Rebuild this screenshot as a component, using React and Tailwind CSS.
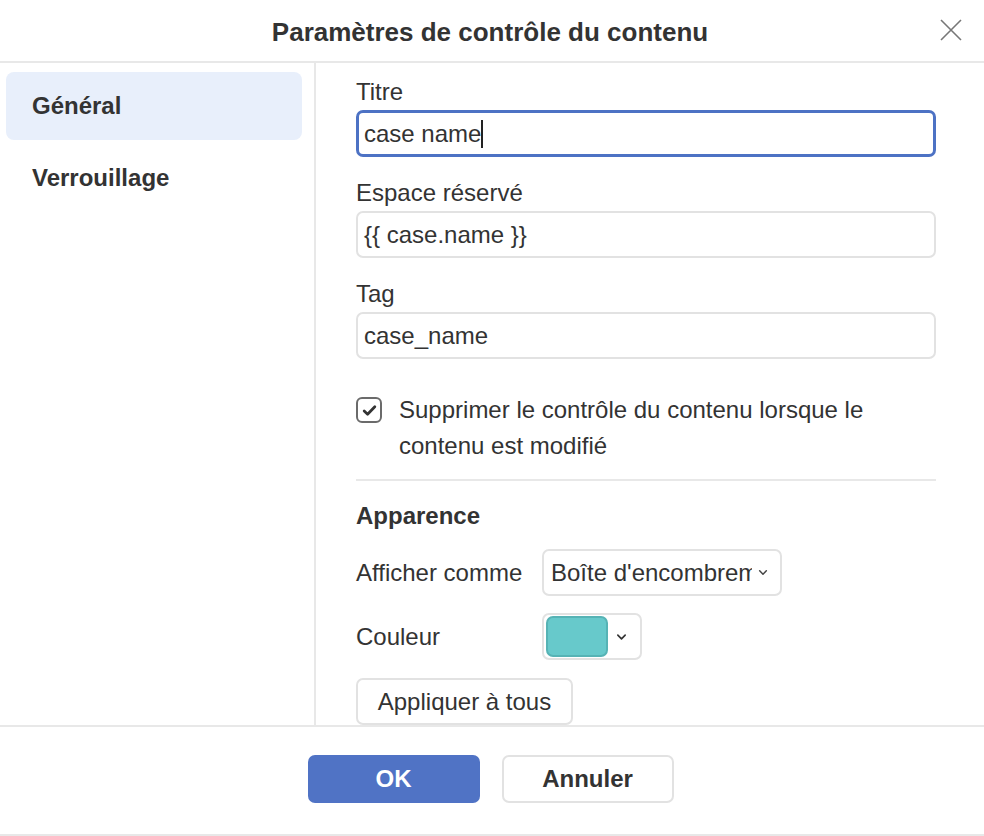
import { useState } from "react"

const font = { fontFamily: '"Liberation Sans", Arial, sans-serif' }

function Chevron({ className }) {
    return (
        <svg viewBox="0 0 12 8" className={className} fill="none" stroke="currentColor" strokeWidth="1.8" strokeLinecap="round" strokeLinejoin="round">
            <path d="M2 2l4 4 4-4" />
        </svg>
    )
}

function Field({ label, value, focused }) {
    return (
        <div className="flex flex-col">
            <label className="text-[24px] leading-[24px] text-[#333] mb-[6px]">{label}</label>
            <div className={"h-[47px] flex items-center rounded-[7px] text-[24px] text-[#333] " + (focused ? "border-[3px] border-[#4d72c4] pl-[5px]" : "border-2 border-[#e2e2e2] pl-[6px]")}>
                <span>{value}</span>
                {focused && <span className="w-[2px] h-[28px] bg-[#222]" />}
            </div>
        </div>
    )
}

export default function App() {
    const [tab, setTab] = useState("general")
    const [checked, setChecked] = useState(true)

    return (
        <div className="w-[984px] h-[836px] bg-white flex flex-col text-[#333]" style={font}>
            {/* dialog header */}
            <div className="h-[63px] shrink-0 flex items-center justify-center relative border-b-2 border-[#e8e8e8] pt-[3px]">
                <h1 className="text-[26px] font-bold text-[#333] ml-[-4px]">Paramètres de contrôle du contenu</h1>
                <button className="absolute right-[21px] top-[18px] w-[24px] h-[24px] text-[#777]">
                    <svg viewBox="0 0 24 24" className="w-[24px] h-[24px]" fill="none" stroke="currentColor" strokeWidth="1.6">
                        <path d="M2 2l20 20M22 2L2 22" />
                    </svg>
                </button>
            </div>

            <div className="flex flex-1 min-h-0">
                {/* sidebar */}
                <div className="w-[316px] shrink-0 border-r-2 border-[#e8e8e8] pl-[6px] pr-[12px] pt-[9px] flex flex-col gap-[4px]">
                    <button onClick={() => setTab("general")} className={"h-[68px] rounded-[8px] text-left pl-[26px] text-[24px] font-bold text-[#333] " + (tab === "general" ? "bg-[#e8effb]" : "")}>Général</button>
                    <button onClick={() => setTab("lock")} className={"h-[68px] rounded-[8px] text-left pl-[26px] text-[24px] font-bold text-[#333] " + (tab === "lock" ? "bg-[#e8effb]" : "")}>Verrouillage</button>
                </div>

                {/* general settings */}
                <div className="flex-1 pl-[40px] pr-[48px] pt-[17px] flex flex-col">
                    <div className="flex flex-col gap-[24px]">
                        <Field label="Titre" value="case name" focused />
                        <Field label="Espace réservé" value="{{ case.name }}" />
                        <Field label="Tag" value="case_name" />
                    </div>

                    <div className="flex mt-[33px] gap-[17px]">
                        <button onClick={() => setChecked(!checked)} className="w-[26px] h-[26px] mt-[5px] shrink-0 rounded-[6px] border-2 border-[#6b6b6b] flex items-center justify-center text-[#333]">
                            {checked && (
                                <svg viewBox="0 0 16 16" className="w-[17px] h-[17px]" fill="none" stroke="currentColor" strokeWidth="2.6" strokeLinecap="round" strokeLinejoin="round">
                                    <path d="M3 8.5l3.2 3L13 4.5" />
                                </svg>
                            )}
                        </button>
                        <p className="text-[24px] leading-[36px]">Supprimer le contrôle du contenu lorsque le contenu est modifié</p>
                    </div>

                    <hr className="mt-[15px] border-t-2 border-[#e8e8e8]" />

                    <h2 className="mt-[23px] text-[24px] leading-[24px] font-bold">Apparence</h2>

                    <div className="mt-[21px] flex items-center">
                        <span className="w-[186px] text-[24px]">Afficher comme</span>
                        <div className="w-[240px] h-[47px] border-2 border-[#e2e2e2] rounded-[7px] flex items-center pl-[7px] pr-[12px] gap-[6px]">
                            <span className="flex-1 overflow-hidden whitespace-nowrap text-[24px]">Boîte d'encombrement</span>
                            <Chevron className="w-[10px] h-[7px] text-[#444]" />
                        </div>
                    </div>

                    <div className="mt-[17px] flex items-center">
                        <span className="w-[186px] text-[24px]">Couleur</span>
                        <div className="w-[100px] h-[47px] border-2 border-[#e2e2e2] rounded-[7px] flex items-center pl-[2px] pr-[6px]">
                            <div className="w-[62px] h-[41px] rounded-[7px] bg-[#67c9cb] border-2 border-[#56b3b5]" />
                            <div className="flex-1 flex justify-center">
                                <Chevron className="w-[11px] h-[8px] text-[#333]" />
                            </div>
                        </div>
                    </div>

                    <button className="mt-[18px] w-[217px] h-[47px] border-2 border-[#e2e2e2] rounded-[7px] text-[24px] text-[#333]">Appliquer à tous</button>
                </div>
            </div>

            {/* footer */}
            <div className="h-[111px] shrink-0 border-t-2 border-b-2 border-[#e8e8e8] flex items-center justify-center gap-[22px] pr-[3px] pb-[4px]">
                <button className="w-[172px] h-[48px] rounded-[7px] bg-[#5073c5] text-white text-[24px] font-bold">OK</button>
                <button className="w-[172px] h-[48px] rounded-[7px] border-2 border-[#e2e2e2] text-[#333] text-[24px] font-bold">Annuler</button>
            </div>
        </div>
    )
}
